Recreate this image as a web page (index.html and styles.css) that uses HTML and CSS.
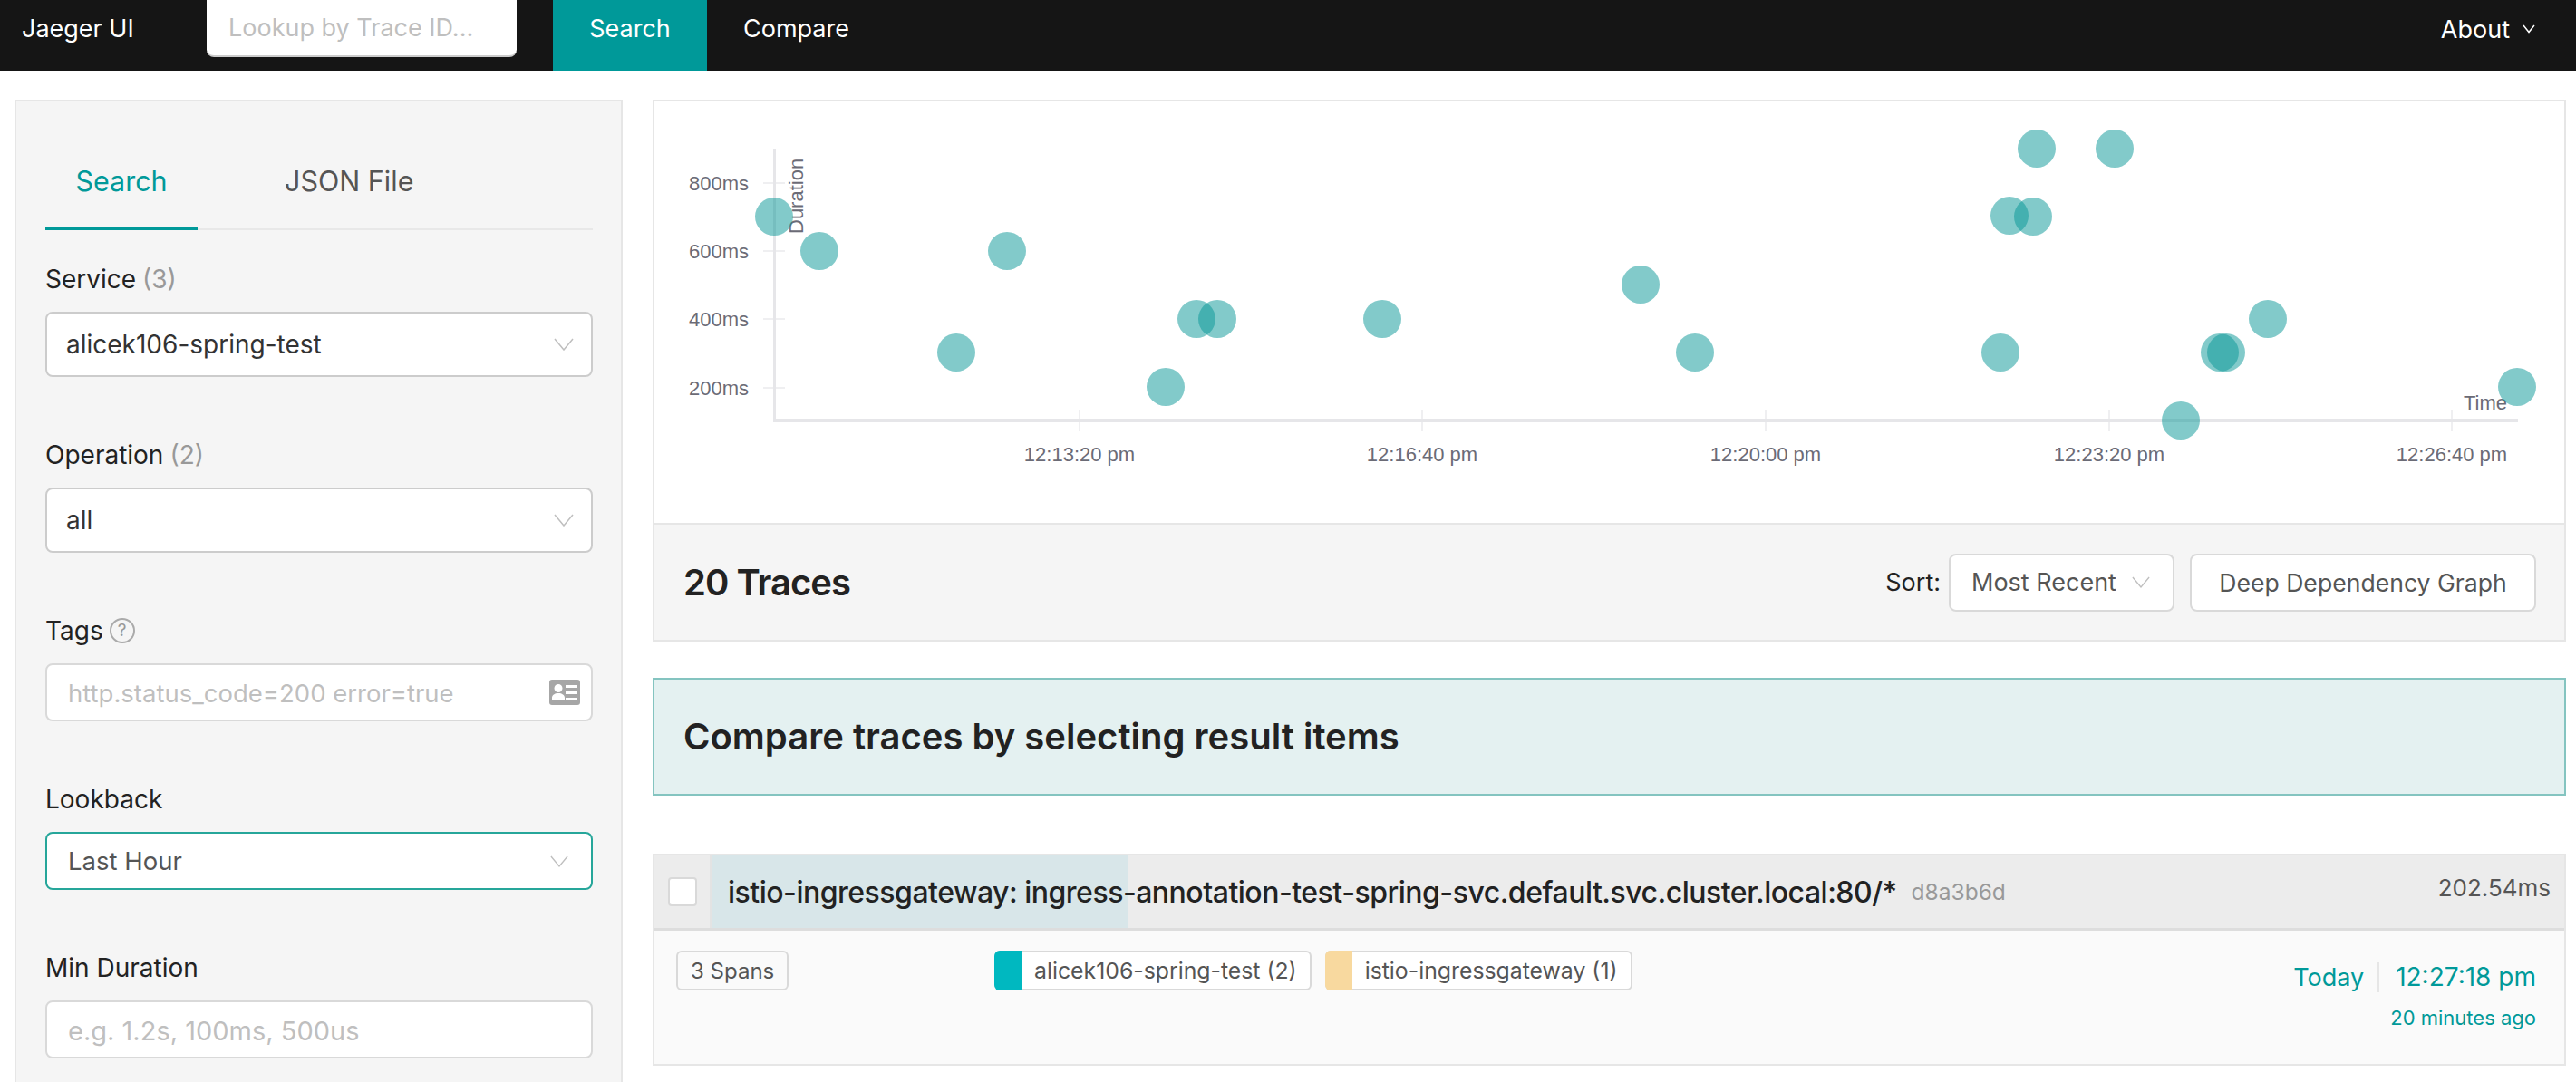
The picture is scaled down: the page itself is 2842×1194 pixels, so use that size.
FILE: index.html
```html
<!DOCTYPE html>
<html>

<head>
    <title>Jaeger UI</title>
    <link rel="stylesheet" href="styles.css">
</head>

<body>
    <!-- Top navigation -->
    <header class="topnav">
        <div class="brand">Jaeger UI</div>
        <input class="trace-lookup" type="text" placeholder="Lookup by Trace ID...">
        <a class="nav-item nav-item-active">Search</a>
        <a class="nav-item">Compare</a>
        <div class="nav-about">
            About
            <svg class="about-chevron" viewBox="0 0 14 10"><polyline points="1,1 7,8.5 13,1"></polyline></svg>
        </div>
    </header>

    <main class="page">
        <!-- Search form -->
        <aside class="search-panel">
            <div class="tabs">
                <div class="tab tab-active">Search</div>
                <div class="tab">JSON File</div>
            </div>

            <div class="field">
                <div class="field-label">Service <span class="count">(3)</span></div>
                <div class="select select-tall">
                    <span>alicek106-spring-test</span>
                    <svg class="chevron" viewBox="0 0 22 14"><polyline points="1,1 11,13 21,1"></polyline></svg>
                </div>
            </div>

            <div class="field">
                <div class="field-label">Operation <span class="count">(2)</span></div>
                <div class="select select-tall">
                    <span>all</span>
                    <svg class="chevron" viewBox="0 0 22 14"><polyline points="1,1 11,13 21,1"></polyline></svg>
                </div>
            </div>

            <div class="field">
                <div class="field-label">Tags
                    <span class="help">?</span>
                </div>
                <div class="text-box">
                    <input class="input-tags" type="text" placeholder="http.status_code=200 error=true">
                    <svg class="tags-icon" viewBox="0 0 34 28">
                        <path fill-rule="evenodd" d="M3 0h28a3 3 0 0 1 3 3v22a3 3 0 0 1-3 3H3a3 3 0 0 1-3-3V3a3 3 0 0 1 3-3zM18 6v3h13V6zM18 13v3h13v-3zM18 20v3h13v-3zM10 5a4.500 4.500 0 1 0 0 9a4.500 4.500 0 1 0 0-9zM3 23h14v-3c0-3-3-5-7-5s-7 2-7 5z"></path>
                    </svg>
                </div>
            </div>

            <div class="field">
                <div class="field-label">Lookback</div>
                <div class="select select-focus">
                    <span>Last Hour</span>
                    <svg class="chevron chevron-small" viewBox="0 0 22 14"><polyline points="1,1 11,13 21,1"></polyline></svg>
                </div>
            </div>

            <div class="field">
                <div class="field-label">Min Duration</div>
                <div class="text-box">
                    <input class="input-duration" type="text" placeholder="e.g. 1.2s, 100ms, 500us">
                </div>
            </div>
        </aside>

        <section class="results">
            <!-- Scatter plot, coordinates are page pixels -->
            <div class="plot">
                <svg class="plot-svg" viewBox="722 112 2107 465">
                    <g class="grid-ticks">
                        <rect x="842" y="201" width="24" height="2"></rect>
                        <rect x="842" y="276" width="24" height="2"></rect>
                        <rect x="842" y="351" width="24" height="2"></rect>
                        <rect x="842" y="427" width="24" height="2"></rect>
                        <rect x="1190" y="452" width="2" height="24"></rect>
                        <rect x="1568" y="452" width="2" height="24"></rect>
                        <rect x="1947" y="452" width="2" height="24"></rect>
                        <rect x="2326" y="452" width="2" height="24"></rect>
                        <rect x="2704" y="452" width="2" height="24"></rect>
                    </g>
                    <rect class="axis" x="853" y="164" width="3" height="302"></rect>
                    <rect class="axis" x="854" y="462" width="1924" height="4"></rect>

                    <g class="axis-text">
                        <text x="826" y="210" text-anchor="end">800ms</text>
                        <text x="826" y="285" text-anchor="end">600ms</text>
                        <text x="826" y="360" text-anchor="end">400ms</text>
                        <text x="826" y="436" text-anchor="end">200ms</text>
                        <text x="1191" y="509" text-anchor="middle">12:13:20 pm</text>
                        <text x="1569" y="509" text-anchor="middle">12:16:40 pm</text>
                        <text x="1948" y="509" text-anchor="middle">12:20:00 pm</text>
                        <text x="2327" y="509" text-anchor="middle">12:23:20 pm</text>
                        <text x="2705" y="509" text-anchor="middle">12:26:40 pm</text>
                        <text x="2718" y="452">Time</text>
                        <text transform="translate(886 258) rotate(-90)">Duration</text>
                    </g>

                    <g class="dots">
                        <circle cx="854" cy="239" r="21"></circle>
                        <circle cx="904" cy="277" r="21"></circle>
                        <circle cx="1111" cy="277" r="21"></circle>
                        <circle cx="1055" cy="389" r="21"></circle>
                        <circle cx="1320" cy="352" r="21"></circle>
                        <circle cx="1343" cy="352" r="21"></circle>
                        <circle cx="1286" cy="427" r="21"></circle>
                        <circle cx="1525" cy="352" r="21"></circle>
                        <circle cx="1810" cy="314" r="21"></circle>
                        <circle cx="1870" cy="389" r="21"></circle>
                        <circle cx="2207" cy="389" r="21"></circle>
                        <circle cx="2217" cy="238" r="21"></circle>
                        <circle cx="2243" cy="239" r="21"></circle>
                        <circle cx="2247" cy="164" r="21"></circle>
                        <circle cx="2333" cy="164" r="21"></circle>
                        <circle cx="2406" cy="464" r="21"></circle>
                        <circle cx="2449" cy="389" r="21"></circle>
                        <circle cx="2456" cy="389" r="21"></circle>
                        <circle cx="2502" cy="352" r="21"></circle>
                        <circle cx="2777" cy="427" r="21"></circle>
                    </g>
                </svg>
            </div>

            <div class="summary">
                <h2 class="summary-title">20 Traces</h2>
                <div class="summary-actions">
                    <span class="sort-label">Sort:</span>
                    <div class="sort-select">
                        <span>Most Recent</span>
                        <svg class="chevron chevron-small" viewBox="0 0 22 14"><polyline points="1,1 11,13 21,1"></polyline></svg>
                    </div>
                    <button class="graph-button">Deep Dependency Graph</button>
                </div>
            </div>

            <div class="compare-banner">Compare traces by selecting result items</div>

            <!-- Trace result -->
            <article class="trace">
                <div class="trace-head">
                    <div class="trace-check"><span class="checkbox"></span></div>
                    <div class="trace-title">
                        <div class="duration-bar" style="width: 460px"></div>
                        <span class="trace-name">istio-ingressgateway: ingress-annotation-test-spring-svc.default.svc.cluster.local:80/*</span>
                        <span class="trace-id">d8a3b6d</span>
                        <span class="trace-duration">202.54ms</span>
                    </div>
                </div>
                <div class="trace-body">
                    <div class="spans-col"><span class="tag tag-plain">3 Spans</span></div>
                    <div class="services">
                        <span class="tag"><i class="swatch swatch-teal"></i>alicek106-spring-test (2)</span>
                        <span class="tag"><i class="swatch swatch-sand"></i>istio-ingressgateway (1)</span>
                    </div>
                    <div class="trace-time">
                        <div class="time-line"><span class="time-day">Today</span><span>12:27:18 pm</span></div>
                        <div class="time-ago">20 minutes ago</div>
                    </div>
                </div>
            </article>
        </section>
    </main>
</body>

</html>
```

FILE: styles.css
```css
* {
    box-sizing: border-box;
}

html,
body {
    margin: 0;
    padding: 0;
    height: 1194px;
    overflow: hidden;
    background: #fff;
}

body {
    font-family: "Inter", "Liberation Sans", sans-serif;
    font-size: 28px;
    color: #222;
}

input {
    font-family: inherit;
    font-size: 28px;
}

input::placeholder {
    color: #bfbfbf;
    opacity: 1;
}

/* Top nav */
.topnav {
    display: flex;
    height: 78px;
    background: #151515;
    color: #fff;
    font-size: 27px;
}

.brand {
    width: 228px;
    padding-left: 24px;
    line-height: 64px;
}

.trace-lookup {
    width: 342px;
    height: 63px;
    margin-right: 40px;
    padding: 0 24px;
    border: 0;
    border-bottom: 2px solid #ccc;
    border-radius: 0 0 8px 8px;
    font-size: 27px;
}

.nav-item {
    padding: 0 40px;
    line-height: 64px;
    color: #fff;
}

.nav-item-active {
    width: 170px;
    background: #009999;
    text-align: center;
    padding: 0;
}

.nav-about {
    display: flex;
    align-items: center;
    gap: 14px;
    height: 64px;
    margin-left: auto;
    padding-right: 45px;
}

.about-chevron {
    width: 14px;
    height: 10px;
    fill: none;
    stroke: #fff;
    stroke-width: 1.500;
}

/* Page layout */
.page {
    display: grid;
    grid-template-columns: 671px 2111px;
    column-gap: 33px;
    padding: 32px 0 0 16px;
}

/* Search panel */
.search-panel {
    height: 1100px;
    padding: 64px 31px 0 32px;
    background: #f5f5f5;
    border: 2px solid #e6e6e6;
}

.tabs {
    display: flex;
    height: 78px;
    margin-bottom: 32px;
    border-bottom: 2px solid #e8e8e8;
}

.tab {
    height: 78px;
    padding: 0 33px;
    margin-right: 63px;
    font-size: 30.500px;
    line-height: 48px;
    color: #555;
}

.tab-active {
    width: 168px;
    padding: 0;
    text-align: center;
    color: #009999;
    border-bottom: 4px solid #009999;
}

.field {
    margin-bottom: 64px;
}

.field-label {
    display: flex;
    align-items: center;
    gap: 7px;
    height: 44px;
    margin-bottom: 14px;
    color: #222;
}

.count {
    color: #999;
}

.help {
    display: inline-block;
    width: 28px;
    height: 28px;
    border: 2px solid #aaa;
    border-radius: 50%;
    font-size: 19px;
    line-height: 24px;
    text-align: center;
    color: #999;
}

.select {
    display: flex;
    align-items: center;
    justify-content: space-between;
    height: 64px;
    padding: 0 25px 0 23px;
    background: #fff;
    border: 2px solid #d9d9d9;
    border-radius: 8px;
    font-size: 27.500px;
    color: #555;
}

.select-tall {
    height: 72px;
    padding: 0 19px 0 21px;
    border-color: #ccc;
    font-size: 28px;
    color: #333;
}

.select-focus {
    border-color: #26a69a;
}

.chevron {
    width: 22px;
    height: 14px;
    fill: none;
    stroke: #bfbfbf;
    stroke-width: 1.500;
}

.chevron-small {
    width: 20px;
    height: 13px;
}

.text-box {
    display: flex;
    align-items: center;
    height: 64px;
    padding: 0 12px 0 23px;
    background: #fff;
    border: 2px solid #d9d9d9;
    border-radius: 8px;
}

.text-box input {
    flex: 1;
    min-width: 0;
    padding: 2px 0 0;
    border: 0;
    outline: 0;
    background: transparent;
}

.text-box .input-tags {
    font-size: 27.500px;
}

.text-box .input-duration {
    font-size: 29px;
}

.tags-icon {
    width: 34px;
    height: 28px;
    fill: #a6a6a6;
}

/* Plot */
.plot {
    height: 467px;
    background: #fff;
    border: 2px solid #e6e6e6;
    border-bottom: 0;
}

.plot-svg {
    display: block;
    width: 2107px;
    height: 465px;
}

.axis {
    fill: #e6e6e9;
}

.grid-ticks {
    fill: #efeff1;
}

.axis-text {
    font-family: "Liberation Sans", sans-serif;
    font-size: 22px;
    fill: #6b6b76;
}

.dots circle {
    fill: #059595;
    opacity: 0.5;
}

/* Summary bar */
.summary {
    display: flex;
    align-items: center;
    justify-content: space-between;
    height: 131px;
    padding: 0 31px 0 32px;
    background: #f5f5f5;
    border: 2px solid #e6e6e6;
}

.summary-title {
    margin: 0;
    font-size: 40px;
    font-weight: 600;
    letter-spacing: -1px;
    color: #222;
}

.summary-actions {
    display: flex;
    align-items: center;
    font-size: 27px;
}

.sort-label {
    margin-right: 9px;
}

.sort-select {
    display: flex;
    align-items: center;
    justify-content: space-between;
    width: 249px;
    height: 64px;
    margin-right: 17px;
    padding: 0 25px 0 23px;
    background: #fff;
    border: 2px solid #d9d9d9;
    border-radius: 8px;
    color: #555;
}

.graph-button {
    width: 382px;
    height: 64px;
    padding: 0;
    background: #fff;
    border: 2px solid #d9d9d9;
    border-radius: 8px;
    font-family: inherit;
    font-size: 26.600px;
    color: #555;
}

/* Compare banner */
.compare-banner {
    height: 130px;
    margin-top: 40px;
    padding-left: 32px;
    background: #e4f1f1;
    border: 2px solid #84c4c0;
    font-size: 40px;
    font-weight: 600;
    line-height: 126px;
    color: #222;
}

/* Trace row */
.trace {
    margin-top: 64px;
    border: 2px solid #e6e6e6;
    background: #fafafa;
}

.trace-head {
    display: flex;
    height: 83px;
    background: #ececec;
    border-bottom: 3px solid #ddd;
}

.trace-check {
    display: flex;
    align-items: center;
    justify-content: center;
    width: 63px;
    border-right: 2px solid #e3e3e3;
}

.checkbox {
    width: 32px;
    height: 32px;
    background: #fff;
    border: 2px solid #d9d9d9;
    border-radius: 4px;
}

.trace-title {
    position: relative;
    display: flex;
    flex: 1;
    align-items: center;
    padding: 0 15px 0 18px;
}

.duration-bar {
    position: absolute;
    top: 0;
    bottom: 0;
    left: 0;
    background: #d8e6e9;
}

.trace-name {
    position: relative;
    font-size: 32px;
    font-weight: 500;
    letter-spacing: -0.500px;
    color: #222;
}

.trace-id {
    position: relative;
    margin-left: 16px;
    font-size: 24.500px;
    color: #999;
}

.trace-duration {
    position: relative;
    margin-left: auto;
    margin-bottom: 10px;
    font-size: 26px;
    color: #555;
}

.trace-body {
    display: flex;
    height: 147px;
    padding: 22px 31px 0 23px;
}

.spans-col {
    width: 352px;
    padding-left: 1px;
}

.tag {
    display: inline-flex;
    align-items: center;
    height: 44px;
    padding-right: 14px;
    background: #fff;
    border: 2px solid #d9d9d9;
    border-radius: 6px;
    font-size: 24.800px;
    color: #555;
}

.tag-plain {
    padding: 0 14px;
    background: #fafafa;
    font-size: 24px;
}

.services {
    display: flex;
    gap: 15px;
}

.swatch {
    align-self: stretch;
    width: 30px;
    margin: -2px 14px -2px -2px;
    border-radius: 6px 0 0 6px;
}

.swatch-teal {
    background: #00b8c0;
}

.swatch-sand {
    background: #f8d99f;
}

.trace-time {
    margin-left: auto;
    margin-top: 7px;
    text-align: right;
    color: #009999;
}

.time-line {
    line-height: 44px;
}

.time-day {
    margin-right: 18px;
    padding-right: 15px;
    border-right: 2px solid #e6e6e6;
    font-size: 27px;
}

.time-ago {
    margin-top: 2px;
    font-size: 22px;
    line-height: 40px;
}
```
